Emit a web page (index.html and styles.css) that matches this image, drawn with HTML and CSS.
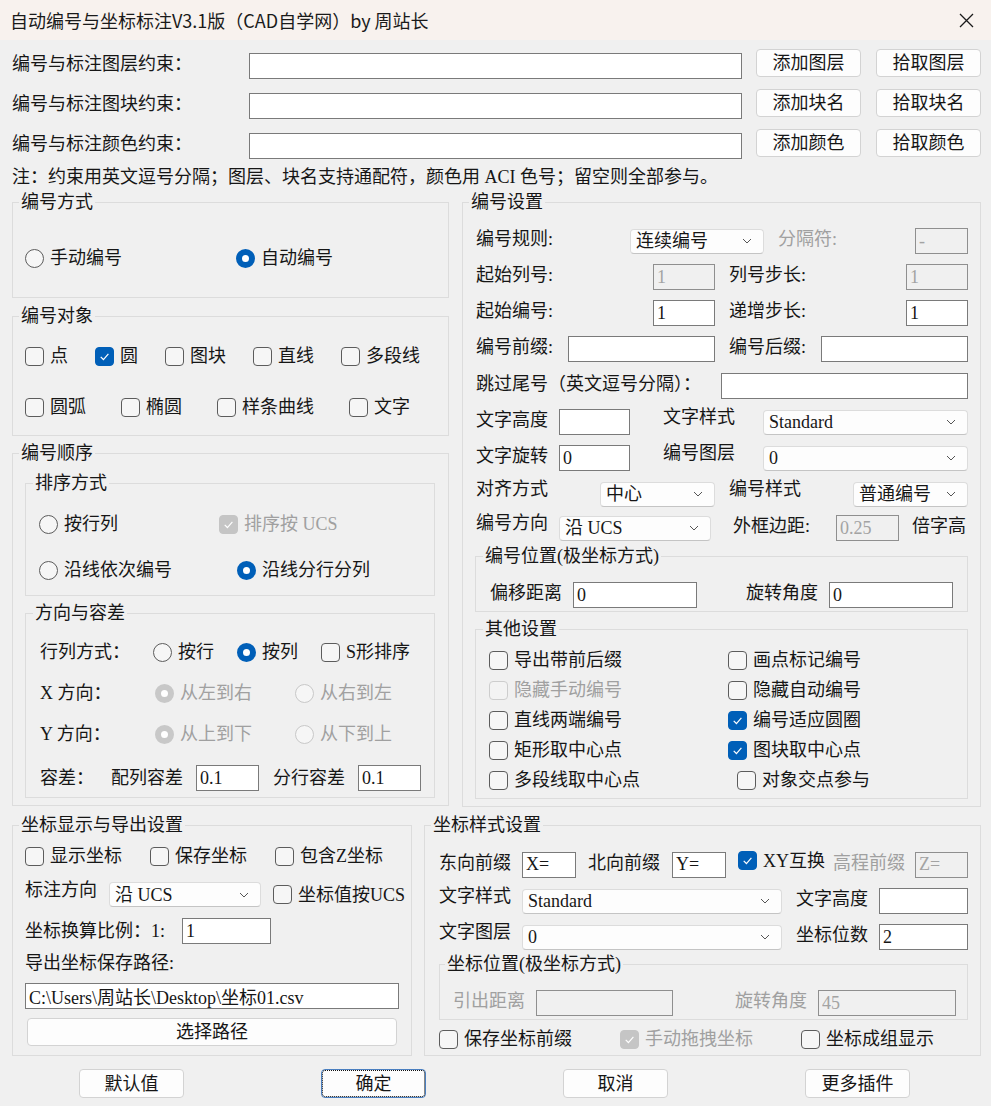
FILE: index.html
```html
<!DOCTYPE html>
<html lang="zh-CN">
<head>
    <meta charset="UTF-8">
    <title>自动编号与坐标标注</title>
    <link rel="stylesheet" href="styles.css">
</head>
<body>
<div class="dialog">
    <div class="titlebar">
        <span class="title">自动编号与坐标标注V3.1版（CAD自学网）by 周站长</span>
        <svg class="close" width="15" height="15" viewBox="0 0 15 15"><path d="M1 1L14 14M14 1L1 14" stroke="#1a1a1a" stroke-width="1.3" fill="none"/></svg>
    </div>

    <div class="top">
        <div class="crows">
            <div class="crow">
                <span class="clabel">编号与标注图层约束：</span>
                <input class="edit cinp" type="text">
                <button class="btn cbtn">添加图层</button>
                <button class="btn cbtn">拾取图层</button>
            </div>
            <div class="crow">
                <span class="clabel">编号与标注图块约束：</span>
                <input class="edit cinp" type="text">
                <button class="btn cbtn">添加块名</button>
                <button class="btn cbtn">拾取块名</button>
            </div>
            <div class="crow">
                <span class="clabel">编号与标注颜色约束：</span>
                <input class="edit cinp" type="text">
                <button class="btn cbtn">添加颜色</button>
                <button class="btn cbtn">拾取颜色</button>
            </div>
        </div>
        <p class="note">注：约束用英文逗号分隔；图层、块名支持通配符，颜色用 ACI 色号；留空则全部参与。</p>
    </div>

    <div class="cols">
        <div class="col-left">
            <fieldset class="grp g-mode">
                <legend>编号方式</legend>
                <div class="line">
                    <label class="opt w211"><span class="rd"></span>手动编号</label>
                    <label class="opt"><span class="rd on"></span>自动编号</label>
                </div>
            </fieldset>

            <fieldset class="grp g-obj">
                <legend>编号对象</legend>
                <div class="line">
                    <label class="opt w70"><span class="cb"></span>点</label>
                    <label class="opt w70"><span class="cb on"><svg viewBox="0 0 12 12"><path d="M2.5 6.3L5 8.8L9.6 3.6"/></svg></span>圆</label>
                    <label class="opt w88"><span class="cb"></span>图块</label>
                    <label class="opt w88"><span class="cb"></span>直线</label>
                    <label class="opt"><span class="cb"></span>多段线</label>
                </div>
                <div class="line obj2">
                    <label class="opt w96"><span class="cb"></span>圆弧</label>
                    <label class="opt w96"><span class="cb"></span>椭圆</label>
                    <label class="opt w132"><span class="cb"></span>样条曲线</label>
                    <label class="opt"><span class="cb"></span>文字</label>
                </div>
            </fieldset>

            <fieldset class="grp g-order">
                <legend>编号顺序</legend>
                <fieldset class="grp s-sort">
                    <legend>排序方式</legend>
                    <div class="line">
                        <label class="opt w180"><span class="rd"></span>按行列</label>
                        <label class="opt dis"><span class="cb dis on"><svg viewBox="0 0 12 12"><path d="M2.5 6.3L5 8.8L9.6 3.6"/></svg></span>排序按 UCS</label>
                    </div>
                    <div class="line sort2">
                        <label class="opt w198"><span class="rd"></span>沿线依次编号</label>
                        <label class="opt"><span class="rd on"></span>沿线分行分列</label>
                    </div>
                </fieldset>
                <fieldset class="grp s-dir">
                    <legend>方向与容差</legend>
                    <div class="line">
                        <span class="lbl w113">行列方式：</span>
                        <label class="opt w84"><span class="rd"></span>按行</label>
                        <label class="opt w84"><span class="rd on"></span>按列</label>
                        <label class="opt"><span class="cb"></span>S形排序</label>
                    </div>
                    <div class="line dir2">
                        <span class="lbl w115">X 方向：</span>
                        <label class="opt dis w140"><span class="rd dis on"></span>从左到右</label>
                        <label class="opt dis"><span class="rd dis"></span>从右到左</label>
                    </div>
                    <div class="line dir2">
                        <span class="lbl w115">Y 方向：</span>
                        <label class="opt dis w140"><span class="rd dis on"></span>从上到下</label>
                        <label class="opt dis"><span class="rd dis"></span>从下到上</label>
                    </div>
                    <div class="line tol">
                        <span class="lbl w71">容差：</span>
                        <span class="lbl w85">配列容差</span>
                        <input class="edit w63" type="text" value="0.1">
                        <span class="lbl w85 ml14">分行容差</span>
                        <input class="edit w63" type="text" value="0.1">
                    </div>
                </fieldset>
            </fieldset>
        </div>

        <fieldset class="grp g-set">
            <legend>编号设置</legend>
            <div class="frow">
                <span class="lbl w154">编号规则:</span>
                <div class="sel w134"><span>连续编号</span><svg viewBox="0 0 10 6"><path d="M1 1L5 5L9 1"/></svg></div>
                <span class="lbl dis w137 ml14">分隔符:</span>
                <input class="edit w53" type="text" value="-" disabled>
            </div>
            <div class="frow">
                <span class="lbl w177">起始列号:</span>
                <input class="edit w62" type="text" value="1" disabled>
                <span class="lbl w177 ml14">列号步长:</span>
                <input class="edit w62" type="text" value="1" disabled>
            </div>
            <div class="frow">
                <span class="lbl w177">起始编号:</span>
                <input class="edit w62" type="text" value="1">
                <span class="lbl w177 ml14">递增步长:</span>
                <input class="edit w62" type="text" value="1">
            </div>
            <div class="frow gap11">
                <span class="lbl w92">编号前缀:</span>
                <input class="edit w147" type="text">
                <span class="lbl w92 ml14">编号后缀:</span>
                <input class="edit w147" type="text">
            </div>
            <div class="frow">
                <span class="lbl w245">跳过尾号（英文逗号分隔）：</span>
                <input class="edit w247" type="text">
            </div>
            <div class="frow">
                <span class="lbl w83">文字高度</span>
                <input class="edit w71" type="text">
                <span class="lbl hi w100 ml33">文字样式</span>
                <div class="sel w205"><span>Standard</span><svg viewBox="0 0 10 6"><path d="M1 1L5 5L9 1"/></svg></div>
            </div>
            <div class="frow">
                <span class="lbl w83">文字旋转</span>
                <input class="edit w71" type="text" value="0">
                <span class="lbl hi w100 ml33">编号图层</span>
                <div class="sel w205"><span>0</span><svg viewBox="0 0 10 6"><path d="M1 1L5 5L9 1"/></svg></div>
            </div>
            <div class="frow gap8">
                <span class="lbl hi w124">对齐方式</span>
                <div class="sel w115"><span>中心</span><svg viewBox="0 0 10 6"><path d="M1 1L5 5L9 1"/></svg></div>
                <span class="lbl hi w124 ml14">编号样式</span>
                <div class="sel w115"><span>普通编号</span><svg viewBox="0 0 10 6"><path d="M1 1L5 5L9 1"/></svg></div>
            </div>
            <div class="frow last">
                <span class="lbl hi w83">编号方向</span>
                <div class="sel w152"><span>沿 UCS</span><svg viewBox="0 0 10 6"><path d="M1 1L5 5L9 1"/></svg></div>
                <span class="lbl w103 ml22">外框边距:</span>
                <input class="edit w63" type="text" value="0.25" disabled>
                <span class="lbl ml13">倍字高</span>
            </div>

            <fieldset class="grp s-pos">
                <legend>编号位置(极坐标方式)</legend>
                <div class="frow last">
                    <span class="lbl w83">偏移距离</span>
                    <input class="edit w124" type="text" value="0">
                    <span class="lbl w83 ml49">旋转角度</span>
                    <input class="edit w124" type="text" value="0">
                </div>
            </fieldset>

            <fieldset class="grp s-other">
                <legend>其他设置</legend>
                <div class="chk-grid">
                    <label class="opt"><span class="cb"></span>导出带前后缀</label>
                    <label class="opt"><span class="cb"></span>画点标记编号</label>
                    <label class="opt dis"><span class="cb dis"></span>隐藏手动编号</label>
                    <label class="opt"><span class="cb"></span>隐藏自动编号</label>
                    <label class="opt"><span class="cb"></span>直线两端编号</label>
                    <label class="opt"><span class="cb on"><svg viewBox="0 0 12 12"><path d="M2.5 6.3L5 8.8L9.6 3.6"/></svg></span>编号适应圆圈</label>
                    <label class="opt"><span class="cb"></span>矩形取中心点</label>
                    <label class="opt"><span class="cb on"><svg viewBox="0 0 12 12"><path d="M2.5 6.3L5 8.8L9.6 3.6"/></svg></span>图块取中心点</label>
                    <label class="opt"><span class="cb"></span>多段线取中心点</label>
                    <label class="opt ml9"><span class="cb"></span>对象交点参与</label>
                </div>
            </fieldset>
        </fieldset>
    </div>

    <div class="bottom">
        <fieldset class="grp g-coord">
            <legend>坐标显示与导出设置</legend>
            <div class="line">
                <label class="opt w125"><span class="cb"></span>显示坐标</label>
                <label class="opt w125"><span class="cb"></span>保存坐标</label>
                <label class="opt"><span class="cb"></span>包含Z坐标</label>
            </div>
            <div class="brow b2">
                <span class="lbl hi w84">标注方向</span>
                <div class="sel w152"><span>沿 UCS</span><svg viewBox="0 0 10 6"><path d="M1 1L5 5L9 1"/></svg></div>
                <label class="opt ml12"><span class="cb"></span>坐标值按UCS</label>
            </div>
            <div class="brow b3">
                <span class="lbl w157">坐标换算比例：1:</span>
                <input class="edit w89" type="text" value="1">
            </div>
            <div class="brow b4">
                <span class="lbl">导出坐标保存路径:</span>
            </div>
            <div class="brow b5">
                <input class="edit w374" type="text" value="C:\Users\周站长\Desktop\坐标01.csv">
            </div>
            <div class="brow b6">
                <button class="btn path-btn">选择路径</button>
            </div>
        </fieldset>

        <fieldset class="grp g-style">
            <legend>坐标样式设置</legend>
            <div class="frow r27">
                <span class="lbl w83">东向前缀</span>
                <input class="edit w54" type="text" value="X=">
                <span class="lbl w84 ml12">北向前缀</span>
                <input class="edit w54" type="text" value="Y=">
                <label class="opt raise w95 ml12"><span class="cb on"><svg viewBox="0 0 12 12"><path d="M2.5 6.3L5 8.8L9.6 3.6"/></svg></span>XY互换</label>
                <span class="lbl dis w82">高程前缀</span>
                <input class="edit w53" type="text" value="Z=" disabled>
            </div>
            <div class="frow">
                <span class="lbl hi w83">文字样式</span>
                <div class="sel w260"><span>Standard</span><svg viewBox="0 0 10 6"><path d="M1 1L5 5L9 1"/></svg></div>
                <span class="lbl w83 ml14">文字高度</span>
                <input class="edit w89" type="text">
            </div>
            <div class="frow last">
                <span class="lbl hi w83">文字图层</span>
                <div class="sel w260"><span>0</span><svg viewBox="0 0 10 6"><path d="M1 1L5 5L9 1"/></svg></div>
                <span class="lbl w83 ml14">坐标位数</span>
                <input class="edit w89" type="text" value="2">
            </div>

            <fieldset class="grp s-cpos">
                <legend>坐标位置(极坐标方式)</legend>
                <div class="frow last">
                    <span class="lbl dis w83">引出距离</span>
                    <input class="edit w137" type="text" disabled>
                    <span class="lbl dis w83 ml62">旋转角度</span>
                    <input class="edit w138" type="text" value="45" disabled>
                </div>
            </fieldset>

            <div class="line keep">
                <label class="opt w181"><span class="cb"></span>保存坐标前缀</label>
                <label class="opt dis w181"><span class="cb dis on"><svg viewBox="0 0 12 12"><path d="M2.5 6.3L5 8.8L9.6 3.6"/></svg></span>手动拖拽坐标</label>
                <label class="opt"><span class="cb"></span>坐标成组显示</label>
            </div>
        </fieldset>
    </div>

    <div class="actions">
        <button class="btn act">默认值</button>
        <button class="btn act focus">确定</button>
        <button class="btn act">取消</button>
        <button class="btn act">更多插件</button>
    </div>
</div>
</body>
</html>
```

FILE: styles.css
```css
* {
    box-sizing: border-box;
}
body {
    margin: 0;
    background-color: #f0f0f0;
    color: #161616;
    font-family: "Liberation Serif", "Noto Sans CJK SC", serif;
    font-size: 18px;
    line-height: 20px;
}
.dialog {
    width: 991px;
    height: 1106px;
    overflow: hidden;
}

/* title bar */
.titlebar {
    height: 40px;
    display: flex;
    align-items: center;
    justify-content: space-between;
    padding: 0 17px 0 10px;
    background-color: #f8f2ee;
    font-family: "Noto Sans CJK SC", sans-serif;
    font-size: 18px;
    color: #1a1a1a;
}

/* controls */
.edit {
    height: 26px;
    margin: 0;
    padding: 0 3px;
    border: 1px solid #7a7a7a;
    border-radius: 0;
    background-color: #fff;
    color: #161616;
    font: inherit;
    flex: none;
}
.edit:disabled {
    background-color: #f0f0f0;
    border-color: #8f8f8f;
    color: #a3a3a3;
}
.btn {
    margin: 0;
    padding: 0;
    background-color: #fdfdfd;
    border: 1px solid #d3d3d3;
    border-radius: 4px;
    color: #161616;
    font: inherit;
}
.sel {
    height: 25px;
    display: flex;
    align-items: center;
    justify-content: space-between;
    padding: 0 11px 0 5px;
    background-color: #fdfdfd;
    border: 1px solid #dcdcdc;
    border-bottom-color: #c4c4c4;
    border-radius: 4px;
    flex: none;
}
.sel svg {
    width: 10px;
    height: 6px;
    fill: none;
    stroke: #555;
    stroke-width: 1;
}
.opt {
    display: flex;
    align-items: center;
    gap: 6px;
    height: 24px;
    white-space: nowrap;
    flex: none;
}
.opt.dis,
.lbl.dis {
    color: #a0a0a0;
}
.cb {
    width: 19px;
    height: 19px;
    display: flex;
    align-items: center;
    justify-content: center;
    border: 1px solid #5c5c5c;
    border-radius: 4px;
    background-color: #f6f6f6;
    flex: none;
}
.cb svg {
    width: 13px;
    height: 13px;
    fill: none;
    stroke: #fff;
    stroke-width: 1.1;
}
.cb.on {
    background-color: #005fb8;
    border-color: #005fb8;
}
.cb.dis {
    border-color: #cdcdcd;
    background-color: #f3f3f3;
}
.cb.dis.on {
    background-color: #c5c5c5;
    border-color: #c5c5c5;
}
.rd {
    width: 19px;
    height: 19px;
    border: 1px solid #5c5c5c;
    border-radius: 50%;
    background-color: #f6f6f6;
    flex: none;
}
.rd.on {
    border-width: 6px;
    border-color: #005fb8;
    background-color: #fff;
}
.rd.dis {
    border-color: #c8c8c8;
}
.lbl {
    white-space: nowrap;
    flex: none;
}

/* constraint rows */
.top {
    padding: 9px 0 0 12px;
}
.crows {
    display: flex;
    flex-direction: column;
    gap: 10px;
}
.crow {
    display: flex;
    height: 30px;
}
.crow .clabel {
    width: 237px;
    align-self: center;
}
.crow .cinp {
    width: 493px;
    align-self: flex-end;
}
.crow .cbtn {
    width: 105px;
    height: 28px;
    margin-left: 14px;
}
.crow .cbtn + .cbtn {
    margin-left: 15px;
}
.note {
    margin: 8px 0 0;
}

/* widths and spacing */
.w53 { width: 53px; }
.w54 { width: 54px; }
.w62 { width: 62px; }
.w63 { width: 63px; }
.w70 { width: 70px; }
.w71 { width: 71px; }
.w82 { width: 82px; }
.w83 { width: 83px; }
.w84 { width: 84px; }
.w85 { width: 85px; }
.w88 { width: 88px; }
.w89 { width: 89px; }
.w92 { width: 92px; }
.w95 { width: 95px; }
.w96 { width: 96px; }
.w100 { width: 100px; }
.w103 { width: 103px; }
.w113 { width: 113px; }
.w115 { width: 115px; }
.w124 { width: 124px; }
.w125 { width: 125px; }
.w132 { width: 132px; }
.w134 { width: 134px; }
.w137 { width: 137px; }
.w138 { width: 138px; }
.w140 { width: 140px; }
.w147 { width: 147px; }
.w152 { width: 152px; }
.w154 { width: 154px; }
.w157 { width: 157px; }
.w177 { width: 177px; }
.w180 { width: 180px; }
.w181 { width: 181px; }
.w198 { width: 198px; }
.w205 { width: 205px; }
.w211 { width: 211px; }
.w245 { width: 245px; }
.w247 { width: 247px; }
.w260 { width: 260px; }
.w374 { width: 374px; }
.ml9 { margin-left: 9px; }
.ml12 { margin-left: 12px; }
.ml13 { margin-left: 13px; }
.ml14 { margin-left: 14px; }
.ml22 { margin-left: 22px; }
.ml33 { margin-left: 33px; }
.ml49 { margin-left: 49px; }
.ml62 { margin-left: 62px; }

/* group boxes */
.grp {
    margin: 0;
    padding: 0;
    border: 1px solid #dcdcdc;
    min-width: 0;
}
.grp > legend {
    margin-left: -6px;
    padding: 0 2px;
    line-height: 20px;
}
.s-dir > legend,
.g-set > legend,
.s-pos > legend {
    margin-left: -7px;
}
.g-style > legend,
.s-cpos > legend {
    margin-left: -8px;
}
.line {
    display: flex;
    align-items: center;
    height: 24px;
}

.cols {
    display: flex;
    align-items: flex-start;
    padding: 5px 0 0 12px;
}
.col-left {
    width: 437px;
}
.g-mode {
    height: 106px;
    padding: 34px 12px 0;
}
.g-obj {
    height: 130px;
    margin-top: 8px;
    padding: 18px 12px 0;
}
.obj2 {
    margin-top: 27px;
}
.g-order {
    height: 363px;
    margin-top: 7px;
    padding: 10px 13px 0 12px;
}
.s-sort {
    height: 123px;
    padding: 19px 13px 0;
}
.sort2 {
    margin-top: 22px;
}
.s-dir {
    height: 195px;
    margin-top: 7px;
    padding: 17px 13px 0 14px;
}
.dir2 {
    margin-top: 17px;
}
.tol {
    height: 26px;
    margin-top: 19px;
}

.g-set {
    width: 519px;
    height: 615px;
    margin-left: 13px;
    padding: 16px 12px 0 13px;
}
.frow {
    display: flex;
    align-items: center;
    height: 26px;
    margin-bottom: 10px;
}
.frow.gap11 {
    margin-bottom: 11px;
}
.frow.gap8 {
    margin-bottom: 8px;
}
.frow.last {
    margin-bottom: 0;
}
.frow > .lbl {
    margin-bottom: 4px;
}
.frow > .lbl.hi,
.brow > .lbl.hi {
    margin-bottom: 10px;
}
.s-pos {
    height: 66px;
    margin: 5px 0 0 -1px;
    padding: 16px 0 0 14px;
}
.s-other {
    height: 180px;
    margin: 7px 0 0 -1px;
    padding: 6px 0 0 13px;
}
.chk-grid {
    display: grid;
    grid-template-columns: 239px auto;
    grid-auto-rows: 30px;
    align-items: center;
}

/* bottom groups */
.bottom {
    display: flex;
    padding: 8px 0 0 12px;
}
.g-coord {
    width: 400px;
    height: 241px;
    padding: 9px 12px 0;
}
.brow {
    display: flex;
    align-items: center;
}
.b2 {
    height: 25px;
    margin-top: 14px;
}
.b3 {
    height: 26px;
    margin-top: 11px;
}
.b4 {
    height: 20px;
    margin-top: 9px;
}
.b5 {
    margin-top: 10px;
}
.b6 {
    margin-top: 9px;
}
.path-btn {
    width: 370px;
    height: 28px;
    margin-left: 2px;
}
.g-style {
    width: 557px;
    height: 241px;
    margin-left: 12px;
    padding: 16px 12px 0 14px;
}
.frow.r27 {
    height: 27px;
}
.opt.raise {
    align-self: flex-start;
    height: 19px;
}
.s-cpos {
    height: 66px;
    margin-top: 4px;
    padding: 16px 0 0 13px;
}
.keep {
    margin-top: 7px;
}

/* dialog buttons */
.actions {
    display: flex;
    gap: 137px;
    padding-left: 79px;
    margin-top: 13px;
}
.act {
    width: 105px;
    height: 29px;
}
.act.focus {
    border-color: #4a7fc0;
    outline: 1px dotted #111;
    outline-offset: -2px;
}
```
